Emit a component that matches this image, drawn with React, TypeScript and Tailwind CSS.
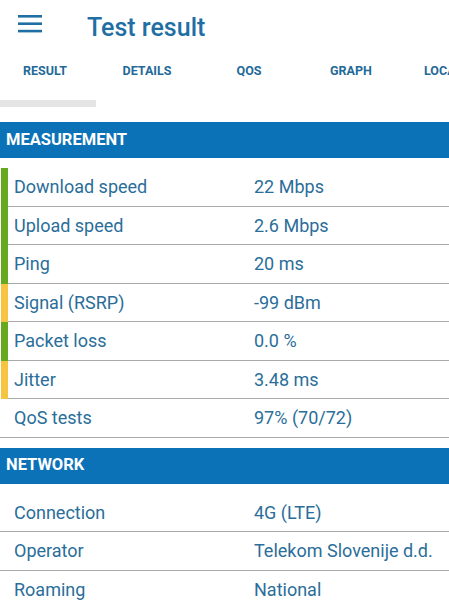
import React from 'react';

type Row = { label: string; value: string; bar?: 'green' | 'yellow' };

const measurement: Row[] = [
  { label: 'Download speed', value: '22 Mbps', bar: 'green' },
  { label: 'Upload speed', value: '2.6 Mbps', bar: 'green' },
  { label: 'Ping', value: '20 ms', bar: 'green' },
  { label: 'Signal (RSRP)', value: '-99 dBm', bar: 'yellow' },
  { label: 'Packet loss', value: '0.0 %', bar: 'green' },
  { label: 'Jitter', value: '3.48 ms', bar: 'yellow' },
  { label: 'QoS tests', value: '97% (70/72)' },
];

const network: Row[] = [
  { label: 'Connection', value: '4G (LTE)' },
  { label: 'Operator', value: 'Telekom Slovenije d.d.' },
  { label: 'Roaming', value: 'National' },
];

const tabs = ['RESULT', 'DETAILS', 'QOS', 'GRAPH'];

function SectionHeader({ title }: { title: string }) {
  return (
    <div className="h-[36px] bg-[#0b72b8] flex items-center pl-[6px] text-white font-bold text-[16.5px]">
      {title}
    </div>
  );
}

function DataRow({ row }: { row: Row }) {
  const barColor =
    row.bar === 'green' ? 'bg-[#66a91f]' : row.bar === 'yellow' ? 'bg-[#f6c440]' : '';
  return (
    <div className="flex h-[38.5px]">
      {row.bar ? (
        <div className={`w-[7px] ml-px shrink-0 ${barColor}`} />
      ) : (
        <div className="w-[8px] shrink-0 border-b border-[#a9a9a9]" />
      )}
      <div className="flex-1 flex items-center border-b border-[#a9a9a9] text-[18px] text-[#2a6e99]">
        <div className="w-[246px] pl-[6px]">{row.label}</div>
        <div className="whitespace-nowrap">{row.value}</div>
      </div>
    </div>
  );
}

export default function App() {
  return (
    <div
      className="w-[449px] h-[600px] overflow-hidden bg-white"
      style={{ fontFamily: 'Roboto, "Noto Sans", sans-serif' }}
    >
      {/* app bar */}
      <div className="h-[52px] flex items-center">
        <svg width="24" height="18" viewBox="0 0 24 18" className="ml-[18px] mt-[-4px]">
          <rect x="0" y="0" width="24" height="2.6" fill="#1f6fa5" />
          <rect x="0" y="7.4" width="24" height="2.6" fill="#1f6fa5" />
          <rect x="0" y="14.8" width="24" height="2.6" fill="#1f6fa5" />
        </svg>
        <div className="ml-[45px] mt-[4px] text-[25px] font-medium text-[#1f6fa5]">Test result</div>
      </div>

      {/* tabs */}
      <div className="h-[40px] flex items-center whitespace-nowrap mt-[-1px] ml-[-6px]">
        {tabs.map((t) => (
          <div
            key={t}
            className="w-[102px] shrink-0 text-center text-[12.5px] font-bold text-[#1f6a99]"
          >
            {t}
          </div>
        ))}
        <div className="shrink-0 pl-[22px] text-[12.5px] font-bold text-[#1f6a99]">LOCATION</div>
      </div>
      <div className="h-[7px] w-[96px] bg-[#e5e5e5] mt-[9px]" />

      <div className="mt-[15px]">
        <SectionHeader title="MEASUREMENT" />
        <div className="pt-[10px]">
          {measurement.map((r) => (
            <DataRow key={r.label} row={r} />
          ))}
        </div>
      </div>

      <div className="mt-[10px]">
        <SectionHeader title="NETWORK" />
        <div className="pt-[10px]">
          {network.map((r) => (
            <DataRow key={r.label} row={r} />
          ))}
        </div>
      </div>
    </div>
  );
}
